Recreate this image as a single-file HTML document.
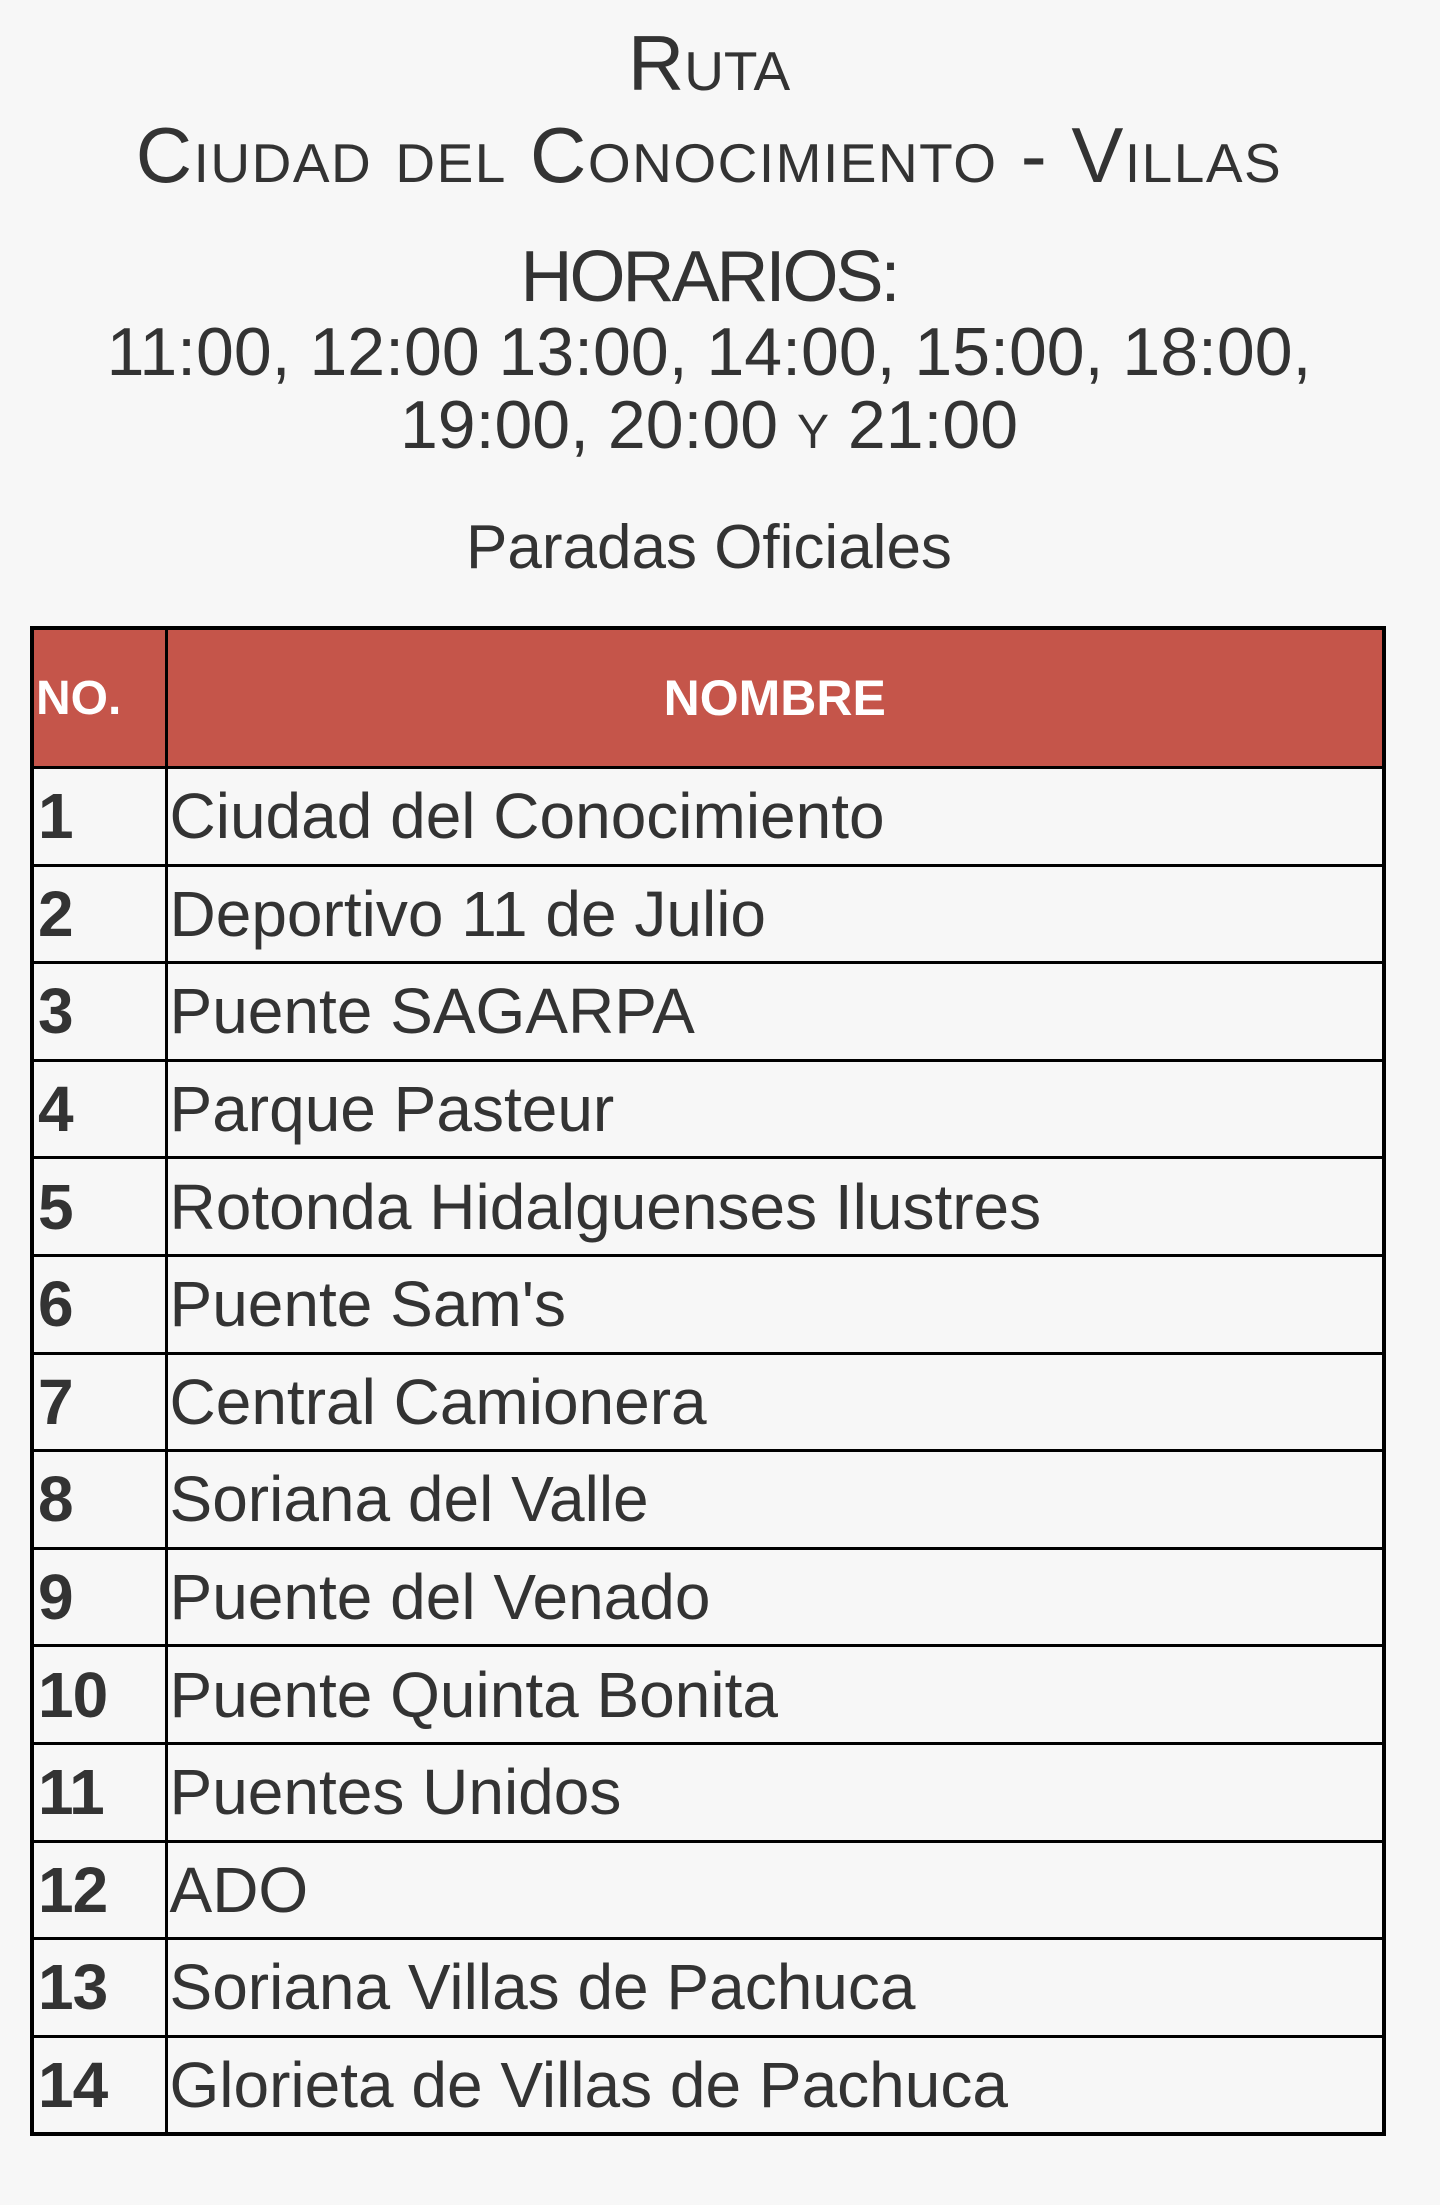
<!DOCTYPE html>
<html><head><meta charset="utf-8"><style>
html,body{margin:0;padding:0;background:#f7f7f7;}
body{width:1440px;height:2205px;position:relative;overflow:hidden;font-family:"Liberation Sans",sans-serif;color:#333;}
.l{position:absolute;left:0;width:1418px;text-align:center;white-space:nowrap;line-height:1.117;}
.sc{font-variant:small-caps;}
table{position:absolute;left:30px;top:626px;width:1356px;border-collapse:collapse;border:4px solid #000;table-layout:fixed;}
td,th{border:3px solid #000;padding:0;white-space:nowrap;}
th{background:#c5554a;color:#fff;font-weight:bold;font-size:50px;height:136px;}
th.n{text-align:left;padding-left:2px;font-size:48px;}
td{height:94.6px;font-size:64px;line-height:94px;padding-left:2px;}
td.n{font-weight:bold;padding-left:4px;font-size:64px;letter-spacing:-1px;}
</style></head><body>
<div class="l sc" style="top:20px;font-size:78px;letter-spacing:0px;">Ruta</div>
<div class="l sc" style="top:112px;font-size:78px;letter-spacing:1.5px;">Ciudad del Conocimiento - Villas</div>
<div class="l" style="top:237px;font-size:72px;letter-spacing:-3px;">HORARIOS:</div>
<div class="l" style="top:315px;font-size:68px;letter-spacing:0px;">11:00, 12:00 13:00, 14:00, 15:00, 18:00,</div>
<div class="l" style="top:388px;font-size:68px;letter-spacing:0px;">19:00, 20:00 <span class="sc">y</span> 21:00</div>
<div class="l" style="top:513px;font-size:62px;letter-spacing:0px;">Paradas Oficiales</div>
<table>
<colgroup><col style="width:134px"><col></colgroup>
<tr><th class="n">NO.</th><th>NOMBRE</th></tr>
<tr><td class="n">1</td><td>Ciudad del Conocimiento</td></tr>
<tr><td class="n">2</td><td>Deportivo 11 de Julio</td></tr>
<tr><td class="n">3</td><td>Puente SAGARPA</td></tr>
<tr><td class="n">4</td><td>Parque Pasteur</td></tr>
<tr><td class="n">5</td><td>Rotonda Hidalguenses Ilustres</td></tr>
<tr><td class="n">6</td><td>Puente Sam's</td></tr>
<tr><td class="n">7</td><td>Central Camionera</td></tr>
<tr><td class="n">8</td><td>Soriana del Valle</td></tr>
<tr><td class="n">9</td><td>Puente del Venado</td></tr>
<tr><td class="n">10</td><td>Puente Quinta Bonita</td></tr>
<tr><td class="n">11</td><td>Puentes Unidos</td></tr>
<tr><td class="n">12</td><td>ADO</td></tr>
<tr><td class="n">13</td><td>Soriana Villas de Pachuca</td></tr>
<tr><td class="n">14</td><td>Glorieta de Villas de Pachuca</td></tr>
</table>
</body></html>
